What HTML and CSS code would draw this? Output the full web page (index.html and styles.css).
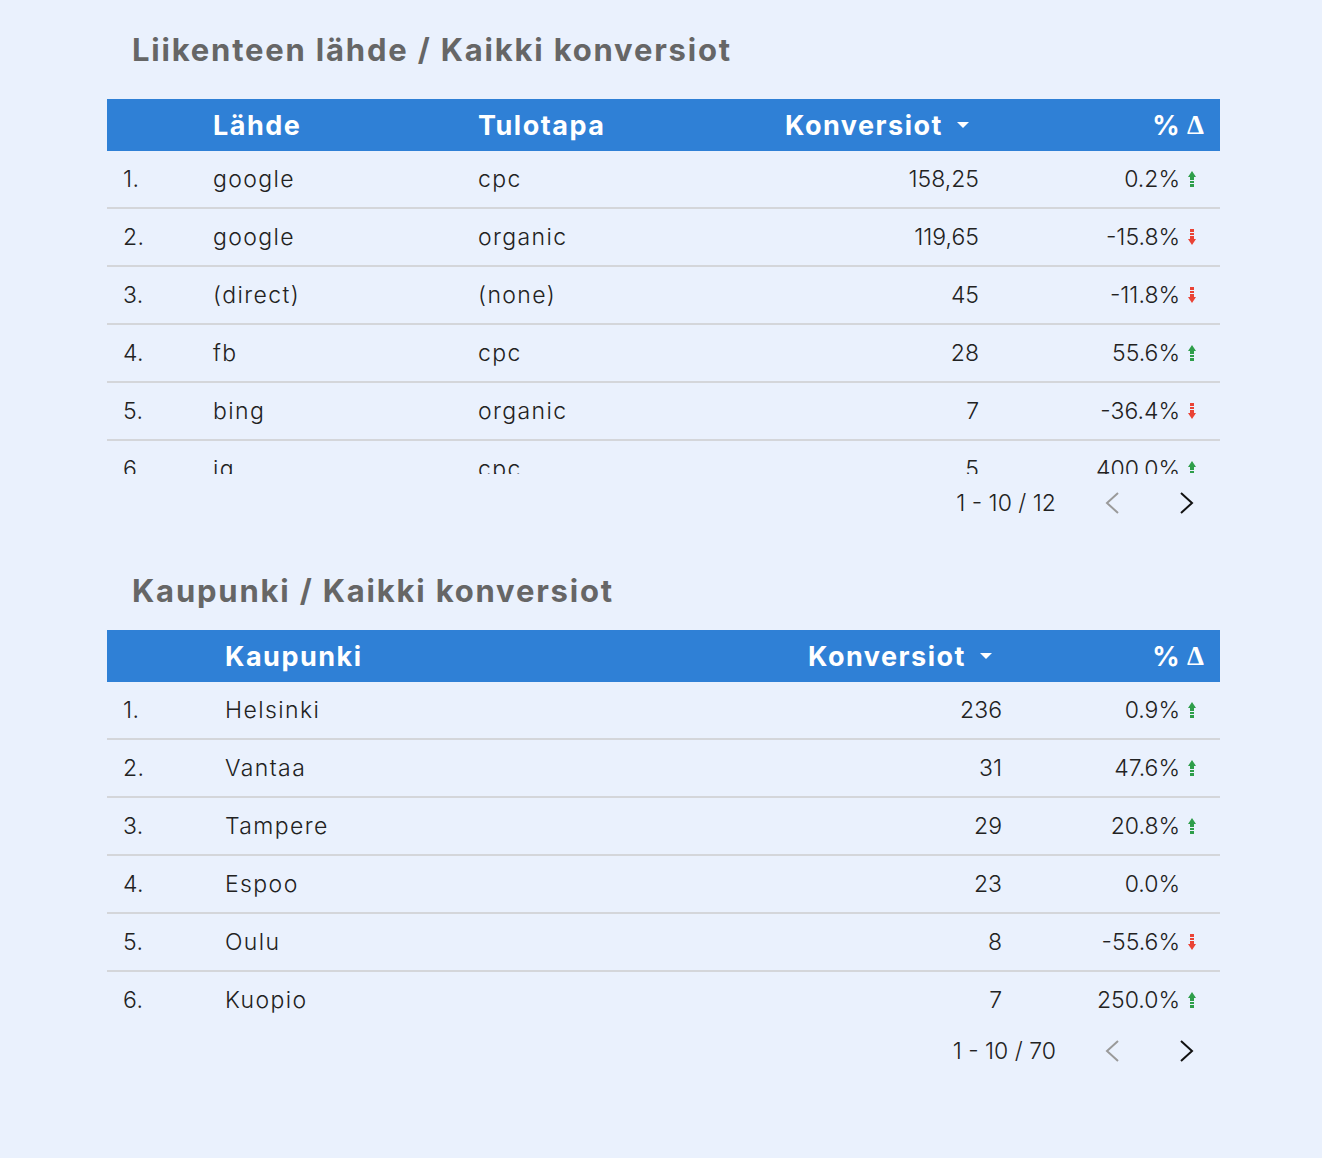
FILE: index.html
```html
<!DOCTYPE html>
<html lang="fi">
<head>
<meta charset="utf-8">
<title>Konversiot</title>
<link rel="stylesheet" href="styles.css">
</head>
<body>
<main class="page">
  <section class="widget widget-source">
    <h2 class="widget-title">Liikenteen lähde / Kaikki konversiot</h2>
    <div class="table t-source">
      <div class="row head">
        <div class="cell"></div>
        <div class="cell">Lähde</div>
        <div class="cell">Tulotapa</div>
        <div class="cell num conv-head">Konversiot <span class="sort"></span></div>
        <div class="cell num pct-head">% <span class="delta">Δ</span></div>
      </div>
      <div class="body clipped">
        <div class="row"><div class="cell idx">1.</div><div class="cell">google</div><div class="cell">cpc</div><div class="cell num conv">158,25</div><div class="cell num pct">0.2%<svg class="trend up" viewBox="0 0 8 16"><path d="M0 6 L4 0 L8 6 Z M2 6 H6 V9 H2 Z M2 10 H6 V12 H2 Z M2 13 H6 V16 H2 Z"/></svg></div></div>
        <div class="row"><div class="cell idx">2.</div><div class="cell">google</div><div class="cell">organic</div><div class="cell num conv">119,65</div><div class="cell num pct">-15.8%<svg class="trend down" viewBox="0 0 8 16"><path d="M0 10 L4 16 L8 10 Z M2 10 H6 V7 H2 Z M2 6 H6 V4 H2 Z M2 3 H6 V0 H2 Z"/></svg></div></div>
        <div class="row"><div class="cell idx">3.</div><div class="cell">(direct)</div><div class="cell">(none)</div><div class="cell num conv">45</div><div class="cell num pct">-11.8%<svg class="trend down" viewBox="0 0 8 16"><path d="M0 10 L4 16 L8 10 Z M2 10 H6 V7 H2 Z M2 6 H6 V4 H2 Z M2 3 H6 V0 H2 Z"/></svg></div></div>
        <div class="row"><div class="cell idx">4.</div><div class="cell">fb</div><div class="cell">cpc</div><div class="cell num conv">28</div><div class="cell num pct">55.6%<svg class="trend up" viewBox="0 0 8 16"><path d="M0 6 L4 0 L8 6 Z M2 6 H6 V9 H2 Z M2 10 H6 V12 H2 Z M2 13 H6 V16 H2 Z"/></svg></div></div>
        <div class="row"><div class="cell idx">5.</div><div class="cell">bing</div><div class="cell">organic</div><div class="cell num conv">7</div><div class="cell num pct">-36.4%<svg class="trend down" viewBox="0 0 8 16"><path d="M0 10 L4 16 L8 10 Z M2 10 H6 V7 H2 Z M2 6 H6 V4 H2 Z M2 3 H6 V0 H2 Z"/></svg></div></div>
        <div class="row"><div class="cell idx">6.</div><div class="cell">ig</div><div class="cell">cpc</div><div class="cell num conv">5</div><div class="cell num pct">400.0%<svg class="trend up" viewBox="0 0 8 16"><path d="M0 6 L4 0 L8 6 Z M2 6 H6 V9 H2 Z M2 10 H6 V12 H2 Z M2 13 H6 V16 H2 Z"/></svg></div></div>
      </div>
    </div>
    <div class="pager">
      <span class="pager-text">1 - 10 / 12</span>
      <span class="chev prev"><svg viewBox="0 0 16 24" width="16" height="24"><path d="M14 2 L3 12 L14 22" fill="none" stroke="currentColor" stroke-width="2"/></svg></span>
      <span class="chev next"><svg viewBox="0 0 16 24" width="16" height="24"><path d="M2 2 L13 12 L2 22" fill="none" stroke="currentColor" stroke-width="2"/></svg></span>
    </div>
  </section>

  <section class="widget widget-city">
    <h2 class="widget-title">Kaupunki / Kaikki konversiot</h2>
    <div class="table t-city">
      <div class="row head">
        <div class="cell"></div>
        <div class="cell">Kaupunki</div>
        <div class="cell num conv-head">Konversiot <span class="sort"></span></div>
        <div class="cell num pct-head">% <span class="delta">Δ</span></div>
      </div>
      <div class="body">
        <div class="row"><div class="cell idx">1.</div><div class="cell">Helsinki</div><div class="cell num conv">236</div><div class="cell num pct">0.9%<svg class="trend up" viewBox="0 0 8 16"><path d="M0 6 L4 0 L8 6 Z M2 6 H6 V9 H2 Z M2 10 H6 V12 H2 Z M2 13 H6 V16 H2 Z"/></svg></div></div>
        <div class="row"><div class="cell idx">2.</div><div class="cell">Vantaa</div><div class="cell num conv">31</div><div class="cell num pct">47.6%<svg class="trend up" viewBox="0 0 8 16"><path d="M0 6 L4 0 L8 6 Z M2 6 H6 V9 H2 Z M2 10 H6 V12 H2 Z M2 13 H6 V16 H2 Z"/></svg></div></div>
        <div class="row"><div class="cell idx">3.</div><div class="cell">Tampere</div><div class="cell num conv">29</div><div class="cell num pct">20.8%<svg class="trend up" viewBox="0 0 8 16"><path d="M0 6 L4 0 L8 6 Z M2 6 H6 V9 H2 Z M2 10 H6 V12 H2 Z M2 13 H6 V16 H2 Z"/></svg></div></div>
        <div class="row"><div class="cell idx">4.</div><div class="cell">Espoo</div><div class="cell num conv">23</div><div class="cell num pct">0.0%<span class="trend none"></span></div></div>
        <div class="row"><div class="cell idx">5.</div><div class="cell">Oulu</div><div class="cell num conv">8</div><div class="cell num pct">-55.6%<svg class="trend down" viewBox="0 0 8 16"><path d="M0 10 L4 16 L8 10 Z M2 10 H6 V7 H2 Z M2 6 H6 V4 H2 Z M2 3 H6 V0 H2 Z"/></svg></div></div>
        <div class="row last"><div class="cell idx">6.</div><div class="cell">Kuopio</div><div class="cell num conv">7</div><div class="cell num pct">250.0%<svg class="trend up" viewBox="0 0 8 16"><path d="M0 6 L4 0 L8 6 Z M2 6 H6 V9 H2 Z M2 10 H6 V12 H2 Z M2 13 H6 V16 H2 Z"/></svg></div></div>
      </div>
    </div>
    <div class="pager pager-short">
      <span class="pager-text">1 - 10 / 70</span>
      <span class="chev prev"><svg viewBox="0 0 16 24" width="16" height="24"><path d="M14 2 L3 12 L14 22" fill="none" stroke="currentColor" stroke-width="2"/></svg></span>
      <span class="chev next"><svg viewBox="0 0 16 24" width="16" height="24"><path d="M2 2 L13 12 L2 22" fill="none" stroke="currentColor" stroke-width="2"/></svg></span>
    </div>
  </section>
</main>
</body>
</html>
```

FILE: styles.css
```css
html, body {
  margin: 0;
  padding: 0;
  background: #eaf1fd;
}
body {
  font-family: Inter, "Open Sans", "DejaVu Sans", sans-serif;
  color: #222222;
  min-height: 1158px;
}
.page {
  width: 1113px;
  margin-left: 107px;
  padding-top: 32px;
}
.widget-title {
  margin: 0 0 0 25px;
  font-size: 31px;
  line-height: 36px;
  font-weight: 700;
  letter-spacing: 1.8px;
  color: #666666;
}
.widget-source .widget-title { margin-bottom: 31px; }
.widget-city { margin-top: 41px; }
.widget-city .widget-title { margin-bottom: 21px; }

.row {
  display: grid;
  align-items: center;
  height: 56px;
  border-bottom: 2px solid #d4d6da;
  font-size: 23px;
  font-weight: 300;
  letter-spacing: 1.4px;
}
.row.head {
  height: 52px;
  border-bottom: 0;
  background: #2f80d6;
  color: #ffffff;
  font-weight: 700;
  font-size: 27px;
  letter-spacing: 1.5px;
}
.t-source .row { grid-template-columns: 106px 265px 1fr 240px 220px; }
.t-city .row { grid-template-columns: 118px 1fr 240px 197px; }

.body.clipped {
  height: 323px;
  overflow: hidden;
}
.row.last { border-bottom: 0; }

.cell { white-space: nowrap; }
.idx { padding-left: 16px; letter-spacing: 0.4px; }
.num {
  display: flex;
  justify-content: flex-end;
  align-items: center;
}
.conv { padding-right: 21px; letter-spacing: 0; }
.pct { padding-right: 24px; letter-spacing: 0; }
.conv-head { padding-right: 31px; }
.pct-head { padding-right: 16px; }

.sort {
  display: inline-block;
  width: 0;
  height: 0;
  margin-left: 14px;
  border-left: 6px solid transparent;
  border-right: 6px solid transparent;
  border-top: 6px solid #ffffff;
}
.delta {
  font-family: "Liberation Serif", "DejaVu Serif", serif;
  font-weight: 700;
  margin-left: 6px;
  letter-spacing: 0;
}

.trend {
  display: inline-block;
  width: 8px;
  height: 16px;
  margin-left: 8px;
  flex: none;
}
.trend.up { fill: #2e9e4a; }
.trend.down { fill: #ea4335; }

.pager {
  display: flex;
  justify-content: flex-end;
  align-items: center;
  height: 58px;
  font-size: 23px;
  font-weight: 300;
  letter-spacing: 0;
  color: #222222;
}
.pager-short { height: 46px; }
.pager-text { margin-right: 48px; }
.chev {
  display: inline-flex;
  width: 16px;
  height: 24px;
}
.chev.prev { color: #9a9a9a; margin-right: 59px; }
.chev.next { color: #111111; margin-right: 25px; }
```
